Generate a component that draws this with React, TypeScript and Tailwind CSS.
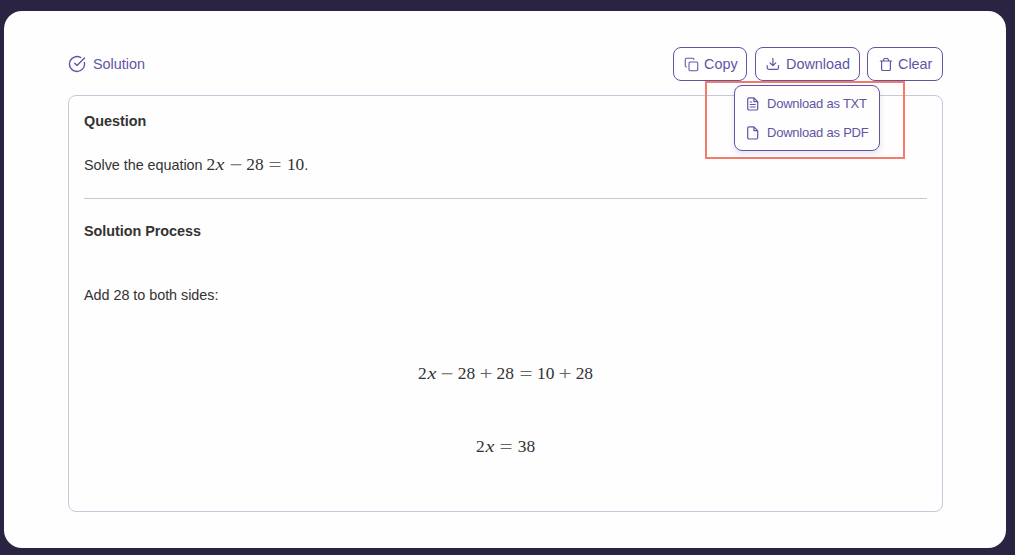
import React from "react";
import { CircleCheckBig, Copy } from "lucide-react";

function Op({ sign, rel = false }: { sign: string; rel?: boolean }) {
  return (
    <span
      className={`inline-flex w-[0.778em] justify-center text-[#666666] ${rel ? "mx-[0.278em]" : "mx-[0.222em]"}`}
    >
      <span className="inline-block translate-y-[1px] scale-x-[1.32] scale-y-[1.05]">{sign}</span>
    </span>
  );
}

function X() {
  return (
    <span className="inline-flex w-[0.572em] justify-center">
      <span className="inline-block scale-x-[1.15] italic">x</span>
    </span>
  );
}

function MathText({ children }: { children: React.ReactNode }) {
  return (
    <span className="inline-block whitespace-nowrap font-['Liberation_Serif',serif] text-[17.4px] leading-5">
      {children}
    </span>
  );
}

const stroke = {
  fill: "none",
  stroke: "currentColor",
  strokeWidth: 1.2,
  strokeLinecap: "round" as const,
  strokeLinejoin: "round" as const,
};

function DownloadIcon() {
  return (
    <svg width="14" height="14" viewBox="0 0 14 14" {...stroke}>
      <path d="M1.2 8.5v2.3a1.6 1.6 0 0 0 1.6 1.6h8.1a1.6 1.6 0 0 0 1.6-1.6V8.5M6.9 1.3v7.2M4 5.8l2.9 2.9 2.9-2.9" />
    </svg>
  );
}

function TrashIcon() {
  return (
    <svg width="14" height="15" viewBox="0 0 14 15" {...stroke}>
      <path d="M1.3 4h11.4M2.6 4v8.2a1.3 1.3 0 0 0 1.3 1.3h6.2a1.3 1.3 0 0 0 1.3-1.3V4M4.3 3.8l.6-1.7a.9.9 0 0 1 .9-.6h2.4a.9.9 0 0 1 .9.6l.6 1.7" />
    </svg>
  );
}

function PageIcon({ lines = false }: { lines?: boolean }) {
  return (
    <svg width="14" height="14" viewBox="0 0 14 14" {...stroke}>
      <path d="M7.9.8H3.1a1.4 1.4 0 0 0-1.4 1.4v9.4A1.4 1.4 0 0 0 3.1 13h7.2a1.4 1.4 0 0 0 1.4-1.4v-7zM7.9.8v3.8h3.8" />
      {lines && <path d="M4.2 5h1.4M4.2 7.5h5M4.2 10h5" />}
    </svg>
  );
}

function ActionButton({
  icon,
  label,
  className,
}: {
  icon: React.ReactNode;
  label: string;
  className: string;
}) {
  return (
    <button
      className={`flex h-[34px] items-center rounded-[8px] border border-[#6254a4] bg-white ${className}`}
    >
      {icon}
      <span className="pt-[2px]">{label}</span>
    </button>
  );
}

export default function App() {
  return (
    <div className="h-[555px] w-[1015px] bg-[#2b2342] pl-1 pt-[11px] font-['Liberation_Sans',Arial,sans-serif] text-[14.4px] text-[#333333]">
      <main className="h-[537px] w-[1002px] rounded-[18px] bg-[#fefefe] pl-16 pt-9">
        <header className="flex h-[34px] w-[875px] items-center justify-between text-[#6254a4]">
          <div className="flex items-center gap-[7px]">
            <CircleCheckBig size={18} strokeWidth={1.8} />
            <span className="pt-[2px]">Solution</span>
          </div>
          <div className="relative flex">
            <ActionButton
              className="w-[74px] gap-[5px] pl-[10px]"
              icon={<Copy size={15} strokeWidth={1.7} />}
              label="Copy"
            />
            <ActionButton
              className="ml-2 w-[105px] gap-[6px] pl-[10px]"
              icon={<DownloadIcon />}
              label="Download"
            />
            <ActionButton
              className="ml-[7px] w-[76px] gap-[5px] pl-[11px]"
              icon={<TrashIcon />}
              label="Clear"
            />
            <div className="absolute left-[32px] top-[34px] z-10 h-[78px] w-[200px] border-2 border-[#f97968] pl-[27px] pt-[2px]">
              <div className="flex h-[66px] w-[146px] flex-col rounded-[8px] border border-[#6254a4] bg-[#fefefe] pl-[11px] pt-[3px] text-[13px] tracking-[-0.22px] shadow-[0_3px_6px_rgba(98,84,164,0.16)]">
                <div className="flex h-[29px] items-center gap-[7px]">
                  <PageIcon lines />
                  <span className="whitespace-nowrap">Download as TXT</span>
                </div>
                <div className="flex h-[29px] items-center gap-[7px]">
                  <PageIcon />
                  <span className="whitespace-nowrap">Download as PDF</span>
                </div>
              </div>
            </div>
          </div>
        </header>
        <section className="mt-[14px] h-[417px] w-[875px] rounded-[8px] border border-[#c9c7da] px-[15px] pt-[15px]">
          <h2 className="h-5 font-bold leading-5">Question</h2>
          <p className="mt-[23px] flex h-5 items-baseline whitespace-pre leading-5">
            <span className="tracking-[-0.04px]">Solve the equation </span>
            <MathText>2<X /><Op sign="−" />28<Op sign="=" rel />10</MathText>
            <span>.</span>
          </p>
          <hr className="mt-6 border-[#c9c7da]" />
          <h2 className="mt-[22px] h-5 font-bold leading-5 tracking-[-0.04px]">Solution Process</h2>
          <p className="mt-11 h-5 leading-5 tracking-[-0.04px]">Add 28 to both sides:</p>
          <div className="mt-[58px] flex h-5 justify-center">
            <MathText>
              2<X /><Op sign="−" />28<Op sign="+" />28<Op sign="=" rel />10<Op sign="+" />28
            </MathText>
          </div>
          <div className="mt-[53px] flex h-5 justify-center">
            <MathText>2<X /><Op sign="=" rel />38</MathText>
          </div>
        </section>
      </main>
    </div>
  );
}
